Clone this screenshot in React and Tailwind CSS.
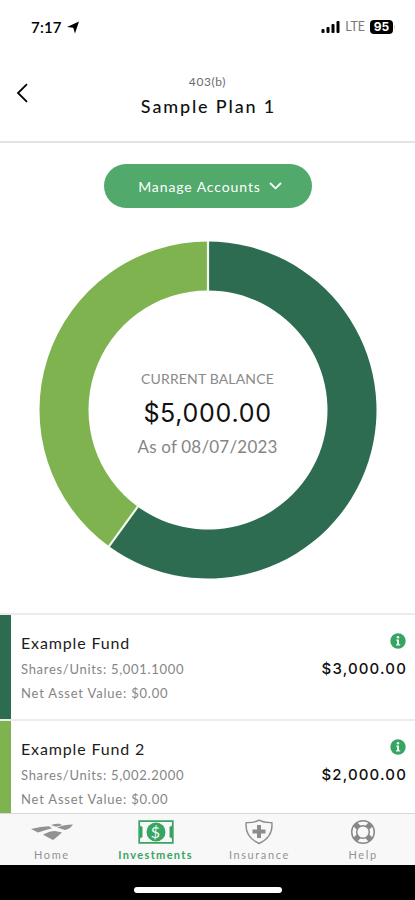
const funds = [
  { name: "Example Fund", units: "5,001.1000", nav: "$0.00", value: "$3,000.00", bar: "bg-[#2d6c51]" },
  { name: "Example Fund 2", units: "5,002.2000", nav: "$0.00", value: "$2,000.00", bar: "bg-[#7eb350]" },
];

function StatusBar() {
  return (
    <div className="h-[54px] flex items-center justify-between pl-[31px] pr-[20px]">
      <div className="flex items-center gap-[5px]">
        <span className="text-[15px] tracking-[0.2px] font-semibold text-black">7:17</span>
        <svg width="12" height="13" viewBox="0 0 13 13" fill="#000">
          <path d="M13 0 L8.6 13 L6.8 6.8 L0 6 Z" />
        </svg>
      </div>
      <div className="flex items-center gap-[5px]">
        <svg width="19" height="12" viewBox="0 0 19 12" fill="#000">
          <rect x="0.5" y="8" width="3" height="4" rx="1" />
          <rect x="5.5" y="6" width="3" height="6" rx="1" />
          <rect x="10.5" y="3" width="3" height="9" rx="1" />
          <rect x="15.5" y="0" width="3" height="12" rx="1" />
        </svg>
        <span className="text-[12.5px] text-[#777]">LTE</span>
        <div className="flex items-center gap-px">
          <div className="w-[23px] h-[14px] rounded-[4px] bg-black text-white text-[12px] leading-[14px] font-bold font-['Inter',sans-serif] flex items-center justify-center">95</div>
          <div className="w-px h-1 bg-gray-300" />
        </div>
      </div>
    </div>
  );
}

function Header() {
  return (
    <header className="h-[89px] border-b-2 border-[#e2e4e3] grid grid-cols-[60px_1fr_60px]">
      <button className="pl-[16px] pt-[29px] self-start" aria-label="Back">
        <svg width="12" height="20" viewBox="0 0 12 20" fill="none" stroke="#000" strokeWidth="1.8">
          <path d="M11 1.2 L2 10 L11 18.8" />
        </svg>
      </button>
      <div className="text-center pt-[20px]">
        <p className="text-[12px] leading-[16px] tracking-[0.6px] text-[#6b6b6b]">403(b)</p>
        <h1 className="text-[18px] leading-[24px] mt-[4px] pl-[2px] font-medium tracking-[1.85px] text-[#111]">Sample Plan 1</h1>
      </div>
    </header>
  );
}

function BalanceChart() {
  return (
    <div className="grid w-[338px] h-[338px] mx-auto mt-[33px] place-items-center">
      <svg className="col-start-1 row-start-1" width="338" height="338" viewBox="-169 -169 338 338">
        <path d="M0 -168.5 A168.5 168.5 0 1 1 -99.04 136.32 L-70.24 96.68 A119.5 119.5 0 1 0 0 -119.5 Z" fill="#2d6c51" />
        <path d="M-99.04 136.32 A168.5 168.5 0 0 1 0 -168.5 L0 -119.5 A119.5 119.5 0 0 0 -70.24 96.68 Z" fill="#7eb350" />
        <path d="M0 -169 V-119 M-99.6 137.2 L-69.9 96.2" stroke="#f3faf0" strokeWidth="2.2" />
      </svg>
      <div className="col-start-1 row-start-1 text-center pt-[7px]">
        <p className="text-[14px] leading-[20px] tracking-[0.15px] text-[#8a8a8a]">CURRENT BALANCE</p>
        <p className="text-[25px] leading-[34px] mt-[7px] tracking-[0.7px] font-['Inter',sans-serif] text-[#111]">$5,000.00</p>
        <p className="text-[17px] leading-[24px] mt-[5px] tracking-[0.2px] text-[#858585]">As of 08/07/2023</p>
      </div>
    </div>
  );
}

function InfoIcon() {
  return (
    <svg width="16" height="16" viewBox="0 0 16 16">
      <circle cx="8" cy="8" r="7.7" fill="#38a463" />
      <circle cx="8" cy="4.3" r="1.3" fill="#e8f7ed" />
      <path d="M6.2 6.5 H9 V11.2 H10.2 V12.4 H6 V11.2 H7 V7.7 H6.2 Z" fill="#e8f7ed" />
    </svg>
  );
}

function FundRow({ fund }) {
  return (
    <div className="h-[105.5px] shrink-0 border-t-2 border-[#ececec] flex">
      <div className={`w-[11px] ${fund.bar}`} />
      <div className="flex-1 flex justify-between pl-[10px] pr-[8px]">
        <div className="pt-[16px]">
          <h2 className="text-[16px] leading-[24px] tracking-[0.85px] text-[#1c1c1c]">{fund.name}</h2>
          <p className="text-[13px] leading-[24px] mt-[2px] tracking-[0.7px] text-[#858585]">Shares/Units: {fund.units}</p>
          <p className="text-[13px] leading-[24px] tracking-[0.8px] text-[#858585]">Net Asset Value: {fund.nav}</p>
        </div>
        <div className="flex flex-col items-end pt-[18px]">
          <div className="pr-px">
            <InfoIcon />
          </div>
          <p className="text-[15px] leading-[20px] mt-[10px] font-medium tracking-[1.15px] font-['Inter',sans-serif] text-[#111]">{fund.value}</p>
        </div>
      </div>
    </div>
  );
}

function HomeIcon() {
  return (
    <svg width="44" height="26" viewBox="0 0 44 26" fill="#929292">
      <path d="M1 10 Q11 7.3 19 7.2 L22 9.3 Q14 11.5 8 13.5 Z" />
      <path d="M21 6 Q26 4.2 30 4.8 L32 6.3 L26 7.8 Z" />
      <path d="M27 8.5 Q34 5.5 43 5.5 Q40 10 35 11 Z" />
      <path d="M13 15.8 Q19 12 25 12 L32 13.5 Q27 18 23 21 Z" />
    </svg>
  );
}

function InvestmentsIcon() {
  return (
    <svg width="36" height="24" viewBox="0 0 36 24" fill="none">
      <path d="M1.2 1.2 H34.8 V22.8 H1.2 Z" stroke="#38a463" strokeWidth="1.7" />
      <path d="M1 5 L4.5 7 V17 L1 19 Z M35 5 L31.5 7 V17 L35 19 Z" fill="#38a463" />
      <circle cx="18" cy="12" r="9.5" fill="#38a463" />
      <text x="18" y="17.6" textAnchor="middle" fontSize="16" fontWeight="400" fill="#f0faf3">$</text>
    </svg>
  );
}

function InsuranceIcon() {
  return (
    <svg width="28" height="26" viewBox="0 0 28 26" fill="none" stroke="#8c8c8c">
      <path d="M14 1.2 Q19 4 26.8 3.6 Q28.5 18 14 24.5 Q-0.5 18 1.2 3.6 Q9 4 14 1.2 Z" strokeWidth="1.4" />
      <path d="M14 6 V19 M7.5 12.5 H20.5" strokeWidth="4" />
    </svg>
  );
}

function HelpIcon() {
  return (
    <svg width="26" height="26" viewBox="0 0 26 26" fill="none" stroke="#888">
      <circle cx="13" cy="13" r="11.3" strokeWidth="1.5" />
      <circle cx="13" cy="13" r="6.3" strokeWidth="1.5" />
      <path d="M5.2 5.2 L8.6 8.6 M20.8 5.2 L17.4 8.6 M5.2 20.8 L8.6 17.4 M20.8 20.8 L17.4 17.4" strokeWidth="5.5" />
    </svg>
  );
}

const tabs = [
  { label: "Home", icon: HomeIcon, color: "text-[#929292] tracking-[1.6px]" },
  { label: "Investments", icon: InvestmentsIcon, color: "text-[#38a463] font-bold tracking-[1.35px]" },
  { label: "Insurance", icon: InsuranceIcon, color: "text-[#929292] tracking-[1.6px]" },
  { label: "Help", icon: HelpIcon, color: "text-[#929292] tracking-[1.6px]" },
];

export default function App() {
  return (
    <div className="w-[415px] h-[900px] bg-white flex flex-col overflow-hidden font-['Lato',sans-serif]">
      <StatusBar />
      <Header />
      <main className="flex-1 min-h-0 overflow-hidden flex flex-col">
        <button className="w-[208px] h-[44px] shrink-0 mx-auto mt-[21px] rounded-full bg-[#51a96c] text-white text-[14px] tracking-[0.9px] flex items-center justify-center gap-[8px] pl-[5px]">
          Manage Accounts
          <svg width="13" height="8" viewBox="0 0 13 8" fill="none" stroke="#fff" strokeWidth="1.8">
            <path d="M1 1 L6.5 6.3 L12 1" />
          </svg>
        </button>
        <BalanceChart />
        <div className="mt-[34px] shrink-0">
          {funds.map((fund) => (
            <FundRow key={fund.name} fund={fund} />
          ))}
        </div>
      </main>
      <nav className="h-[52px] shrink-0 bg-[#f8f8f8] border-t border-[#d8d8d8] grid grid-cols-4">
        {tabs.map((tab) => (
          <div key={tab.label} className={`flex flex-col items-center ${tab.color}`}>
            <div className="h-[36px] flex items-center">
              <tab.icon />
            </div>
            <span className="text-[11px] leading-[10px]">{tab.label}</span>
          </div>
        ))}
      </nav>
      <div className="h-[35px] shrink-0 bg-black flex justify-center pt-[22px]">
        <div className="w-[148px] h-[6px] rounded-full bg-white" />
      </div>
    </div>
  );
}
